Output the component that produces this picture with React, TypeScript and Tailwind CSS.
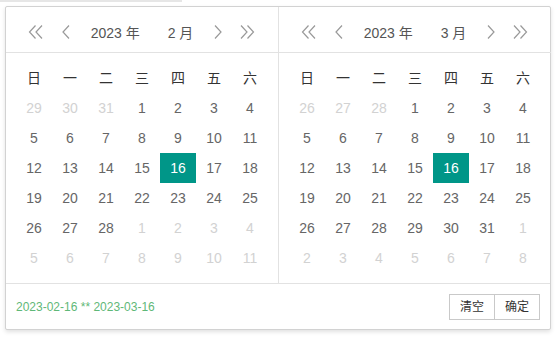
import React from 'react';

type Day = { d: number; other?: boolean };

const WEEK = ['日', '一', '二', '三', '四', '五', '六'];

function buildMonth(prevDays: number[], count: number): Day[] {
  const days: Day[] = prevDays.map((d) => ({ d, other: true }));
  for (let i = 1; i <= count; i++) days.push({ d: i });
  let n = 1;
  while (days.length < 42) days.push({ d: n++, other: true });
  return days;
}

const feb = buildMonth([29, 30, 31], 28);
const mar = buildMonth([26, 27, 28], 31);

function DoubleLeft() {
  return (
    <svg width="16" height="14" viewBox="0 0 16 14" fill="none" stroke="#999" strokeWidth="1.2">
      <path d="M7.5 0.5 L1.5 7 L7.5 13.5" />
      <path d="M14 0.5 L8 7 L14 13.5" />
    </svg>
  );
}

function DoubleRight() {
  return (
    <svg width="16" height="14" viewBox="0 0 16 14" fill="none" stroke="#999" strokeWidth="1.2">
      <path d="M2 0.5 L8 7 L2 13.5" />
      <path d="M8.5 0.5 L14.5 7 L8.5 13.5" />
    </svg>
  );
}

function Left() {
  return (
    <svg width="10" height="14" viewBox="0 0 10 14" fill="none" stroke="#999" strokeWidth="1.2">
      <path d="M8 0.5 L2 7 L8 13.5" />
    </svg>
  );
}

function Right() {
  return (
    <svg width="10" height="14" viewBox="0 0 10 14" fill="none" stroke="#999" strokeWidth="1.2">
      <path d="M2 0.5 L8 7 L2 13.5" />
    </svg>
  );
}

function Panel({ month, days, border }: { month: number; days: Day[]; border?: boolean }) {
  return (
    <div className={border ? 'w-[273px] border-r border-[#e2e2e2]' : 'flex-1'}>
      <div className="h-[46px] pt-[10px] pb-[5px] border-b border-[#e2e2e2] flex items-center pl-[22px] pr-[23px]">
        <DoubleLeft />
        <span className="ml-[17px]"><Left /></span>
        <div className="flex-1 flex justify-center items-center gap-[28px] text-[14px] text-[#555] pt-[2px]">
          <span>2023 年</span>
          <span>{month} 月</span>
        </div>
        <span className="mr-[16px]"><Right /></span>
        <DoubleRight />
      </div>
      <div className="p-[10px]">
        <div className="grid grid-cols-[repeat(7,36px)] w-[252px]">
          {WEEK.map((w) => (
            <div key={w} className="h-[30px] flex items-center justify-center text-[14px] text-[#333]">
              {w}
            </div>
          ))}
          {days.map((day, i) => {
            const sel = !day.other && day.d === 16;
            return (
              <div
                key={i}
                className={
                  'h-[30px] flex items-center justify-center text-[14px] ' +
                  (sel ? 'bg-[#009688] text-white' : day.other ? 'text-[#d2d2d2]' : 'text-[#666]')
                }
              >
                {day.d}
              </div>
            );
          })}
        </div>
      </div>
    </div>
  );
}

export default function App() {
  return (
    <div className="w-[559px] h-[337px] bg-white" style={{ fontFamily: '"Liberation Sans", "Noto Sans CJK SC", sans-serif' }}>
      <div className="w-[182px] h-[2px] bg-[#e6e6e6]" />
      <div className="ml-[5px] mt-[4px] w-[546px] bg-white border border-[#d2d2d2] rounded-[2px] shadow-[0_2px_4px_rgba(0,0,0,0.12)]">
        <div className="flex">
          <Panel month={2} days={feb} border />
          <Panel month={3} days={mar} />
        </div>
        <div className="h-[46px] border-t border-[#e2e2e2] px-[10px] flex items-center justify-between">
          <span className="text-[12px] text-[#5fb878]">2023-02-16 ** 2023-03-16</span>
          <div className="flex">
            <span className="h-[26px] px-[10px] flex items-center border border-[#c9c9c9] text-[12px] text-[#333] bg-white">清空</span>
            <span className="h-[26px] px-[10px] flex items-center border border-[#c9c9c9] -ml-px text-[12px] text-[#333] bg-white">确定</span>
          </div>
        </div>
      </div>
    </div>
  );
}
